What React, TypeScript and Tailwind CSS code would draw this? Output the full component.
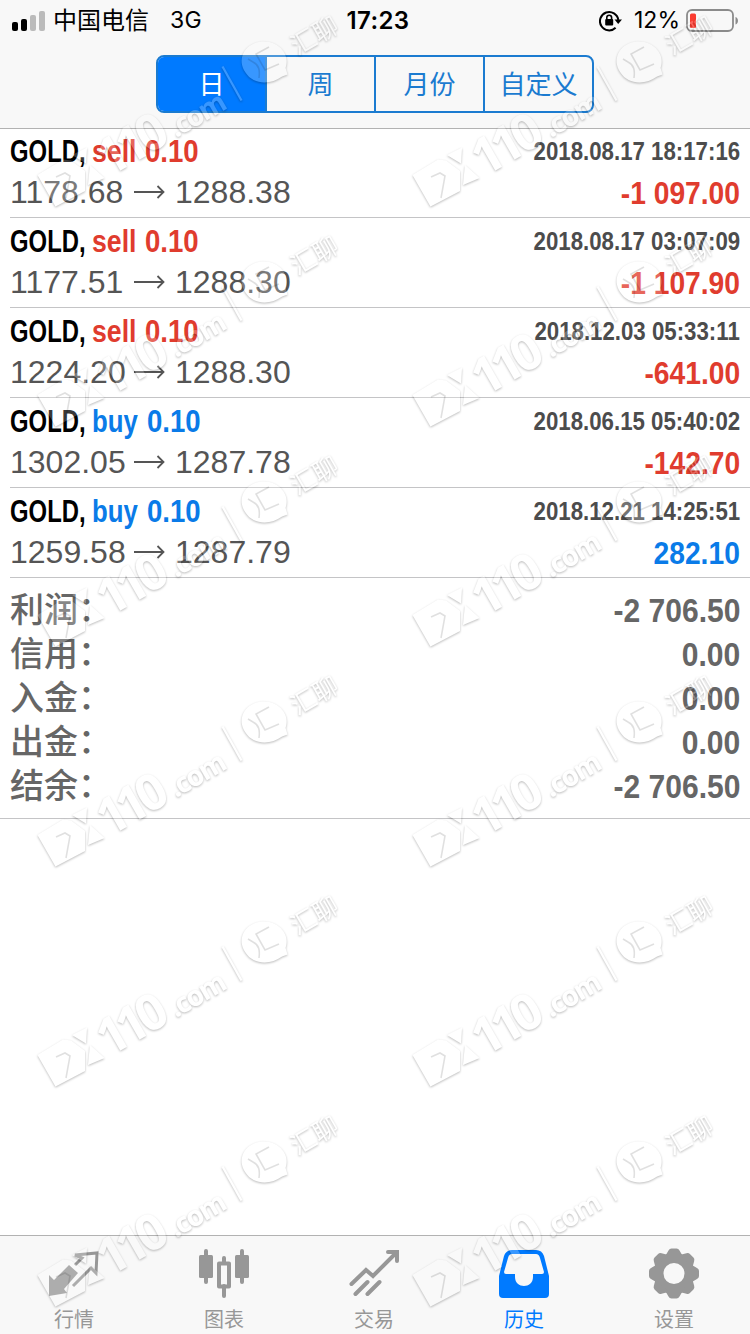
import type { ReactNode } from "react";

interface Deal {
  side: "sell" | "buy";
  volume: string;
  open: string;
  close: string;
  time: string;
  profit: string;
}

const deals: Deal[] = [
  { side: "sell", volume: "0.10", open: "1178.68", close: "1288.38", time: "2018.08.17 18:17:16", profit: "-1 097.00" },
  { side: "sell", volume: "0.10", open: "1177.51", close: "1288.30", time: "2018.08.17 03:07:09", profit: "-1 107.90" },
  { side: "sell", volume: "0.10", open: "1224.20", close: "1288.30", time: "2018.12.03 05:33:11", profit: "-641.00" },
  { side: "buy", volume: "0.10", open: "1302.05", close: "1287.78", time: "2018.06.15 05:40:02", profit: "-142.70" },
  { side: "buy", volume: "0.10", open: "1259.58", close: "1287.79", time: "2018.12.21 14:25:51", profit: "282.10" },
];

const totals = [
  { label: "利润", value: "-2 706.50" },
  { label: "信用", value: "0.00" },
  { label: "入金", value: "0.00" },
  { label: "出金", value: "0.00" },
  { label: "结余", value: "-2 706.50" },
];

const periods = ["日", "周", "月份", "自定义"];

function StatusBar() {
  return (
    <div className="grid h-10 grid-cols-3 items-center pt-px pr-[11px] pl-3 font-['Inter','Noto_Sans_CJK_SC',sans-serif] text-[23px] text-black">
      <div className="flex items-center">
        <svg width="34" height="20" viewBox="0 0 34 20">
          <rect x="0" y="11" width="6" height="9" rx="2" />
          <rect x="9" y="8" width="6" height="12" rx="2" />
          <rect x="18" y="4" width="6" height="16" rx="2" fill="#bbb" />
          <rect x="27" y="0" width="6" height="20" rx="2" fill="#bbb" />
        </svg>
        <span className="ml-[7px] text-2xl leading-none">中国电信</span>
        <span className="ml-[21px] tracking-[0.3px]">3G</span>
      </div>
      <div className="pl-[5px] text-center text-2xl font-semibold tracking-[0.4px]">17:23</div>
      <div className="flex items-center justify-end">
        <svg width="24" height="22" viewBox="0 0 24 22" fill="none" stroke="#000" strokeWidth="2">
          <path d="M16.6 17.8A9.2 9.2 0 1 1 19.3 10" />
          <path d="M15.5 9.5h7.5l-3.8 4.6z" fill="#000" stroke="none" />
          <rect x="6.2" y="9" width="8" height="6.5" rx="1" fill="#000" stroke="none" />
          <path d="M7.8 9.5V7.6a2.4 2.4 0 0 1 4.8 0v1.9" strokeWidth="1.6" />
        </svg>
        <span className="ml-[11px]">12%</span>
        <svg className="ml-[6px]" width="53" height="24" viewBox="0 0 53 24">
          <rect x="1" y="1" width="46" height="21" rx="5" fill="none" stroke="#8b8b8b" strokeWidth="1.8" />
          <rect x="4" y="4.5" width="6" height="14.5" rx="1.5" fill="#fb3b30" />
          <path d="M49.5 8v7.5c3.3-1 3.3-6.500 0-7.500" fill="#8b8b8b" />
        </svg>
      </div>
    </div>
  );
}

function DealRow({ deal }: { deal: Deal }) {
  const isSell = deal.side === "sell";
  return (
    <div className="ml-2.5 flex h-[90px] justify-between border-b border-[#c4c4c6] pr-2.5">
      <div className="pt-1.5">
        <div className="flex h-9 items-center text-[31px] font-bold whitespace-nowrap">
          <span className="w-[82px] origin-left scale-x-[0.77] text-black">GOLD,</span>
          <span className={`flex ${isSell ? "text-[#e03c2e]" : "text-[#0a7be8]"}`}>
            <span className={`origin-left ${isSell ? "w-[53px] scale-x-[0.86]" : "w-[55px] scale-x-[0.83]"}`}>
              {deal.side}
            </span>
            <span className="w-[54px] origin-left scale-x-[0.89]">{deal.volume}</span>
          </span>
        </div>
        <div className="-mt-px flex h-[45px] items-center text-[32px] text-[#555]">
          <span className="w-[115px]">{deal.open}</span>
          <svg className="mr-[10px] ml-[9px]" width="31" height="14" viewBox="0 0 31 14" fill="none" stroke="#555" strokeWidth="1.8">
            <path d="M0 7h30M23.500 1l6 6-6 6" />
          </svg>
          <span>{deal.close}</span>
        </div>
      </div>
      <div className="flex flex-col items-end pt-1.5 font-bold whitespace-nowrap">
        <div className="flex h-9 origin-right scale-x-[0.89] items-center text-[25px] text-[#4c4c4c]">{deal.time}</div>
        <div
          className={`mt-px flex h-[47px] origin-right scale-x-[0.91] items-center text-[31px] ${
            deal.profit.startsWith("-") ? "text-[#e03c2e]" : "text-[#0a7be8]"
          }`}
        >
          {deal.profit}
        </div>
      </div>
    </div>
  );
}

function TabItem({ label, active, children }: { label: string; active?: boolean; children: ReactNode }) {
  return (
    <div className={`flex w-[150px] flex-col items-center pt-3 ${active ? "text-[#007aff]" : "text-[#979797]"}`}>
      <svg className="shrink-0" width="52" height="52" viewBox="0 0 52 52" fill="currentColor">
        {children}
      </svg>
      <span className="mt-[5px] shrink-0 text-xl leading-[30px]">{label}</span>
    </div>
  );
}

function WatermarkShapes() {
  return (
    <>
      <g filter="url(#emboss)" fill="#fff">
        <path d="M37.500 175l25.500-15.500 8 1 14 10.500v20l-29.500 15.500z" />
        <path d="M72 155l15-7.500-1 16zM90 165l14.500 13-16.500 7z" />
        <g fontFamily="Open Sans, sans-serif" fontWeight="700">
          <text transform="translate(109 177) rotate(-30)" fontSize="50" textLength="73">110</text>
          <text transform="translate(176 138) rotate(-30)" fontSize="28" textLength="61">.com</text>
        </g>
        <path d="M221.500 67l2-1 19 34-2 1z" />
        <path d="M282 76.500c-12 9-29 8-36.500-4-9-13-1-28 13.500-30.500 18-3 32 12 26.500 26l2 6.500z" />
        <text
          transform="translate(319 43) rotate(-30)"
          textAnchor="middle"
          fontFamily="Noto Sans CJK SC, sans-serif"
          fontSize="25"
        >
          汇聊
        </text>
      </g>
      {/* lines engraved into the badge and the speech bubble */}
      <path
        d="M56 177l9-4 5 3-4 22M248 59l5 3c6 3 7 8 6 16M269 47l-13 7 9 16 14-6"
        fill="none"
        stroke="#000"
        strokeOpacity="0.12"
        strokeWidth="1.6"
      />
    </>
  );
}

function Watermark() {
  return (
    <svg className="pointer-events-none absolute inset-0" width="750" height="1334" aria-hidden="true">
      <filter id="emboss" x="-5%" y="-5%" width="110%" height="110%" colorInterpolationFilters="sRGB">
        <feGaussianBlur in="SourceAlpha" stdDeviation="1" result="soft" />
        <feOffset in="soft" dx="0.3" dy="0.5" result="shade" />
        <feFlood floodColor="#000" floodOpacity="0.27" />
        <feComposite in2="shade" operator="in" />
        <feComposite in2="SourceAlpha" operator="out" result="edge" />
        <feFlood floodColor="#fff" floodOpacity="0.22" />
        <feComposite in2="SourceAlpha" operator="in" result="face" />
        <feMerge>
          <feMergeNode in="edge" />
          <feMergeNode in="face" />
        </feMerge>
      </filter>
      {[0, 220, 440, 660, 880, 1100].map(y =>
        [0, 375].map(x => (
          <g key={`${x}-${y}`} transform={`translate(${x} ${y})`}>
            <WatermarkShapes />
          </g>
        ))
      )}
    </svg>
  );
}

export default function App() {
  return (
    <div className="relative flex h-[1334px] w-[750px] flex-col overflow-hidden bg-white font-['Liberation_Sans','Noto_Sans_CJK_SC',sans-serif]">
      <header className="h-[129px] border-b border-[#b2b2b2] bg-[#f8f8f8]">
        <StatusBar />
        <div className="mt-[15px] ml-[156px] flex h-[58px] w-[438px] overflow-hidden rounded-lg border-2 border-[#1b7bd0]">
          {periods.map((period, i) => (
            <div
              key={period}
              className={`flex flex-1 items-center justify-center pt-0.5 text-[26px] ${
                i === 0 ? "bg-[#007aff] text-white" : "border-l-2 border-[#1b7bd0] text-[#1b7bd0]"
              }`}
            >
              {period}
            </div>
          ))}
        </div>
      </header>

      <main className="-mt-px flex-1">
        {deals.map(deal => (
          <DealRow key={deal.time} deal={deal} />
        ))}
        <div className="h-[241px] border-b border-[#c4c4c6] pt-2.5 pr-2.5 pl-2.5 text-[#666]">
          {totals.map(total => (
            <div key={total.label} className="flex h-11 items-center justify-between whitespace-nowrap">
              <span className="flex text-[34px] leading-none font-medium">
                {total.label}
                <span className="-mt-px">：</span>
              </span>
              <span className="origin-right scale-x-[0.91] text-[33px] leading-none font-bold">{total.value}</span>
            </div>
          ))}
        </div>
      </main>

      <nav className="-ml-px flex h-[99px] w-[751px] border-t border-[#b2b2b2] bg-[#f8f8f8]">
        <TabItem label="行情">
          <path d="M1 27l5 5 15-15 9 8-14 16 3 4-18 3z" />
          <path d="M27 17l7-7-7-3 22-2-1 20-5-5-18 18" fill="none" stroke="currentColor" strokeWidth="3" />
        </TabItem>
        <TabItem label="图表">
          <g strokeLinecap="round" stroke="currentColor" strokeWidth="4">
            <path d="M8 3v31M26 10v5M26 38v10M44 3v31" />
          </g>
          <rect x="1" y="7" width="14" height="23" rx="1.5" />
          <rect x="37" y="7" width="14" height="23" rx="1.5" />
          <rect x="21" y="15.500" width="10" height="23" fill="none" stroke="currentColor" strokeWidth="4" strokeLinejoin="round" />
        </TabItem>
        <TabItem label="交易">
          <g fill="none" stroke="currentColor" strokeWidth="4" strokeLinecap="round">
            <path d="M3.500 36L18 22l7 6L48 5M7.500 46l12-12M19.500 46l12-12" />
            <path d="M40 4h9v9" />
          </g>
        </TabItem>
        <TabItem label="历史" active>
          <path
            d="M14 2h24q6 0 8 6l5 20v18q0 4-4 4H5q-4 0-4-4V28L6 8q2-6 8-6zM14 6q-3 0-4 4L6 24q0 2 2 2h9v3c0 12 18 12 18 0v-3h9q2 0 2-2L42 10q-1-4-4-4z"
            fillRule="evenodd"
          />
        </TabItem>
        <TabItem label="设置">
          <circle cx="26" cy="25.500" r="15.500" fill="none" stroke="currentColor" strokeWidth="10" />
          {[0, 45, 90, 135, 180, 225, 270, 315].map(angle => (
            <path key={angle} d="M17 8.500l3.500-6q1-2 3-2h5q2 0 3 2l3.500 6z" transform={`rotate(${angle} 26 25.500)`} />
          ))}
        </TabItem>
      </nav>
      <Watermark />
    </div>
  );
}
